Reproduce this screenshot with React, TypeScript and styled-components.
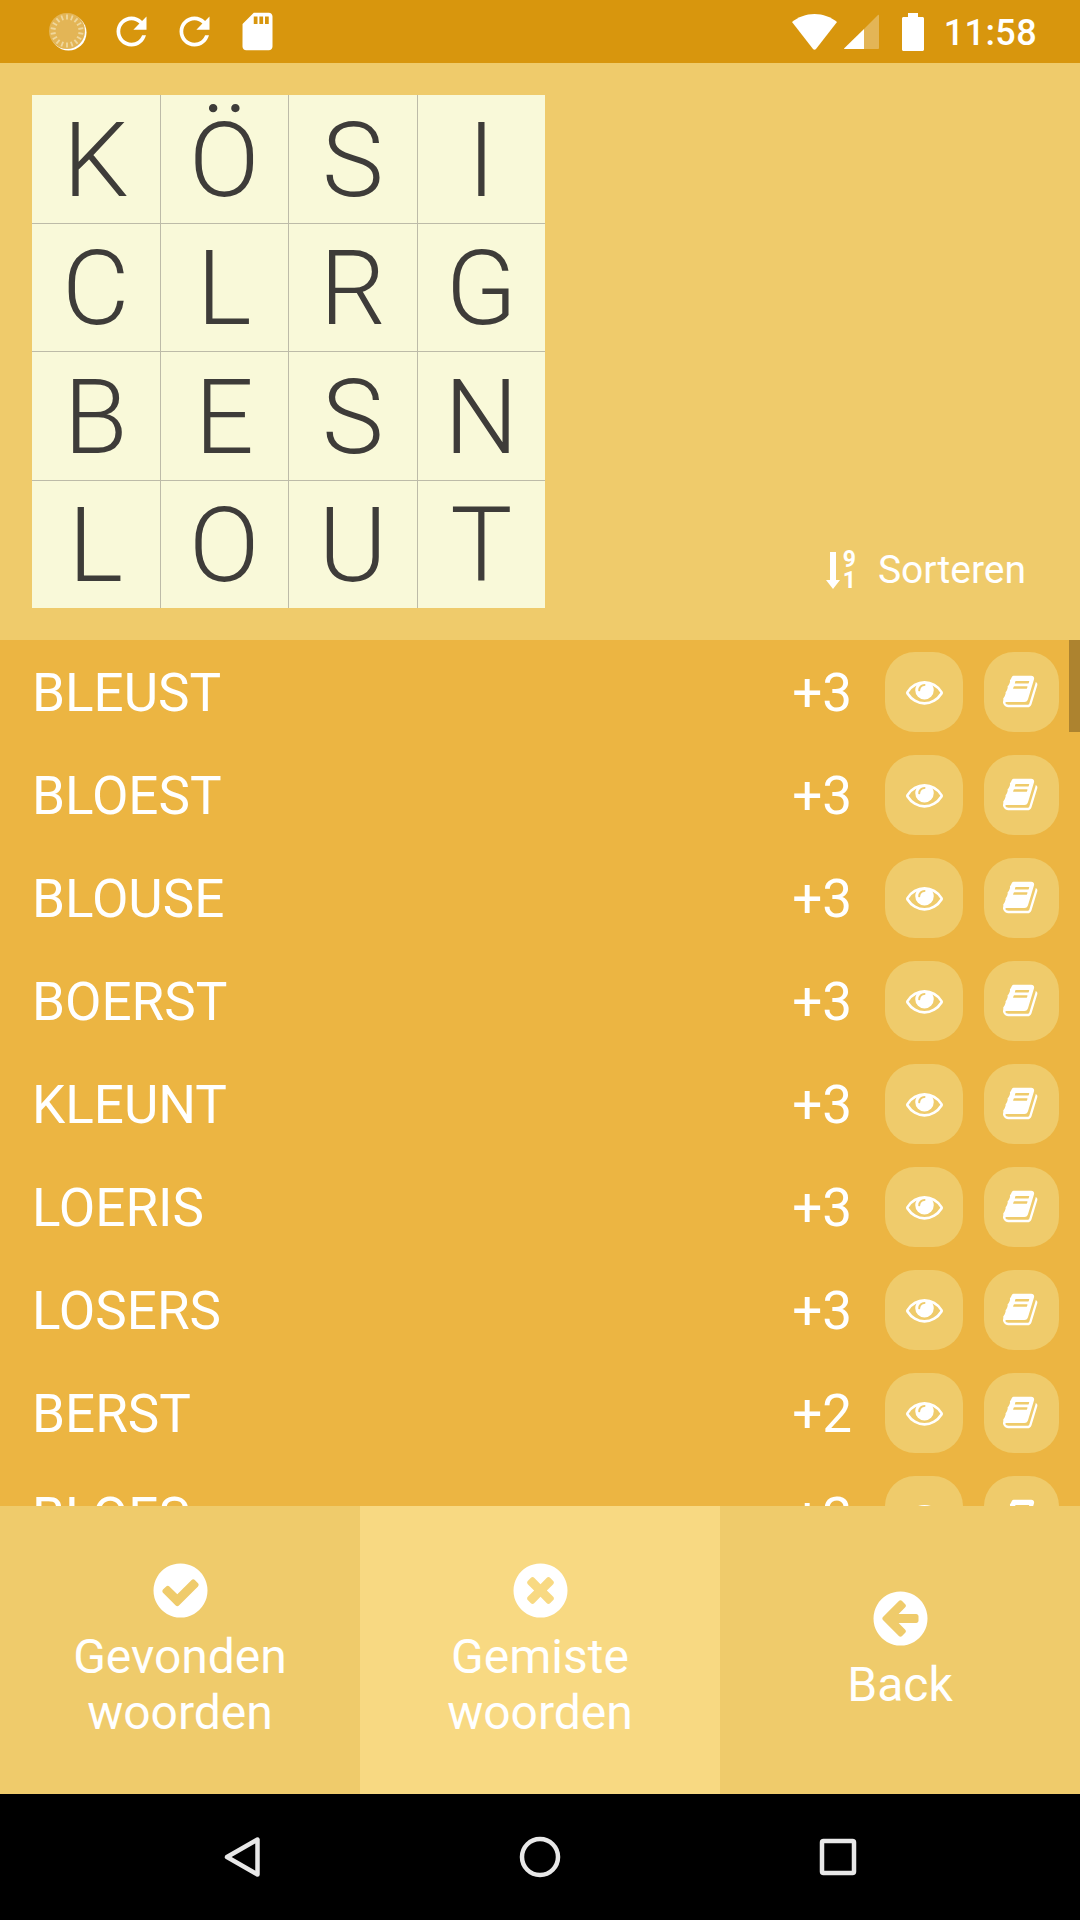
import React from 'react';
import styled, { createGlobalStyle } from 'styled-components';

const GlobalStyle = createGlobalStyle`
  html, body {
    margin: 0;
    padding: 0;
    background: #000;
  }
  * {
    box-sizing: border-box;
  }
`;

const Screen = styled.div`
  width: 1080px;
  height: 1920px;
  display: flex;
  flex-direction: column;
  overflow: hidden;
  font-family: Roboto, "Liberation Sans", sans-serif;
  color: #fff;
`;

const StatusBar = styled.div`
  height: 63px;
  flex: none;
  background: #d8960d;
  display: flex;
  align-items: center;
  padding: 0 43px 0 49px;
`;

const StatusLeft = styled.div`
  display: flex;
  align-items: center;
  gap: 18px;
  margin-right: auto;
`;

const StatusRight = styled.div`
  display: flex;
  align-items: center;
`;

const Clock = styled.span`
  font-size: 36px;
  font-weight: 500;
  margin-left: 20px;
  padding-top: 3px;
  letter-spacing: 0.4px;
`;

const Header = styled.div`
  height: 577px;
  flex: none;
  background: #efcb6b;
  display: flex;
  justify-content: space-between;
  padding: 32px 54px 32px 32px;
`;

const Board = styled.div`
  width: 513px;
  height: 513px;
  display: grid;
  grid-template-columns: repeat(4, 1fr);
  grid-template-rows: repeat(4, 1fr);
  gap: 1px;
  background: #bdbba8;
`;

const Cell = styled.div`
  background: #f9f9d9;
  color: #3e3c39;
  font-size: 104px;
  font-weight: 300;
  padding-top: 3px;
  display: flex;
  align-items: center;
  justify-content: center;
`;

const SortButton = styled.div`
  align-self: flex-end;
  display: flex;
  align-items: center;
  font-size: 39px;
  margin-bottom: 15px;
`;

const SortDigits = styled.div`
  display: flex;
  flex-direction: column;
  align-items: center;
  margin: 0 22px 0 3px;
  font-size: 23px;
  font-weight: 700;
  line-height: 21.500px;
`;

const List = styled.div`
  flex: 1;
  min-height: 0;
  position: relative;
  overflow: hidden;
  background: #ecb542;
`;

const ScrollThumb = styled.div`
  position: absolute;
  top: 0;
  right: 0;
  width: 11px;
  height: 92px;
  background: #ad832f;
`;

const Row = styled.div`
  height: 103px;
  display: flex;
  align-items: center;
  padding: 0 21px 0 32px;
  font-size: 53px;
`;

const Word = styled.span`
  flex: 1;
  padding-top: 2px;
`;

const Score = styled.span`
  margin-right: 33px;
  padding-top: 2px;
`;

const RoundButton = styled.div<{ $width: number; $gap?: number }>`
  width: ${(p) => p.$width}px;
  height: 80px;
  margin-left: ${(p) => p.$gap || 0}px;
  border-radius: 30px;
  background: #efcb6b;
  display: flex;
  align-items: center;
  justify-content: center;
`;

const Tabs = styled.div`
  height: 288px;
  flex: none;
  display: grid;
  grid-template-columns: repeat(3, 1fr);
`;

const Tab = styled.div<{ $active?: boolean }>`
  background: ${(p) => (p.$active ? '#f8d982' : '#efcb6b')};
  display: flex;
  flex-direction: column;
  align-items: center;
  justify-content: center;
  padding-bottom: 1px;
  font-size: 48px;
  line-height: 56px;
  text-align: center;
`;

const TabIcon = styled.svg`
  width: 63px;
  height: 63px;
  margin-bottom: 7px;
`;

const NavBar = styled.div`
  height: 126px;
  flex: none;
  background: #000;
  display: flex;
  align-items: center;
  justify-content: center;
  gap: 250px;
`;

const NavIcon = styled.svg`
  width: 48px;
  height: 48px;
  fill: none;
  stroke: #e8e8e8;
  stroke-width: 4.500;
`;

const PATHS = {
  eye: 'M1664 960q-152-236-381-353 61 104 61 225 0 185-131.5 316.5t-316.5 131.5-316.5-131.5-131.5-316.5q0-121 61-225-229 117-381 353 133 205 333.5 326.5t434.5 121.5 434.5-121.5 333.5-326.5zm-720-384q0-20-14-34t-34-14q-125 0-214.5 89.5t-89.5 214.5q0 20 14 34t34 14 34-14 14-34q0-86 61-147t147-61q20 0 34-14t14-34zm848 384q0 34-20 69-140 230-376.5 368.5t-499.5 138.5-499.5-139-376.5-368q-20-35-20-69t20-69q140-229 376.5-368t499.5-139 499.5 139 376.5 368q20 35 20 69z',
  book: 'M1639 478q40 57 18 129l-275 906q-19 64-76.5 107.5t-122.5 43.5h-923q-77 0-148.5-53.5t-99.5-131.5q-24-67-2-127 0-4 3-27t4-37q1-8-3-21.5t-3-19.5q2-11 8-21t16.5-23.5 16.5-23.5q23-38 45-91.5t30-91.5q3-10 .5-30t-.5-28q3-11 17-28t17-23q21-36 42-92t25-90q1-9-2.5-32t.5-28q4-13 22-30.5t22-22.5q19-26 42.5-84.5t27.5-96.5q1-8-3-25.5t-2-26.5q2-8 9-18t18-23 17-21q8-12 16.5-30.5t15-35 16-36 19.5-32 26.5-23.5 36-11.5 47.5 5.5l-1 3q38-9 51-9h761q74 0 114 56t18 130l-274 906q-36 119-71.5 153.5t-128.5 34.5h-869q-27 0-38 15-11 16-1 43 24 70 144 70h923q29 0 56-15.5t35-41.5l300-987q7-22 5-57 38 15 59 43zm-1064 2q-4 13 2 22.5t20 9.5h608q13 0 25.5-9.5t16.5-22.5l21-64q4-13-2-22.5t-20-9.5h-608q-13 0-25.5 9.5t-16.5 22.5zm-83 256q-4 13 2 22.5t20 9.5h608q13 0 25.5-9.5t16.5-22.5l21-64q4-13-2-22.5t-20-9.5h-608q-13 0-25.5 9.5t-16.5 22.5z',
  check: 'M1412 734q0-28-18-46l-91-90q-19-19-45-19t-45 19l-408 407-226-226q-19-19-45-19t-45 19l-91 90q-18 18-18 46 0 27 18 45l362 362q19 19 45 19 27 0 46-19l543-543q18-18 18-45zm252 162q0 209-103 385.5t-279.5 279.5-385.5 103-385.5-103-279.5-279.5-103-385.5 103-385.5 279.5-279.5 385.5-103 385.5 103 279.5 279.5 103 385.5z',
  times: 'M1277 1122q0-26-19-45l-181-181 181-181q19-19 19-45 0-27-19-46l-90-90q-19-19-46-19-26 0-45 19l-181 181-181-181q-19-19-45-19-27 0-46 19l-90 90q-19 19-19 46 0 26 19 45l181 181-181 181q-19 19-19 45 0 27 19 46l90 90q19 19 46 19 26 0 45-19l181-181 181 181q19 19 45 19 27 0 46-19l90-90q19-19 19-46zm387-226q0 209-103 385.5t-279.5 279.5-385.5 103-385.5-103-279.5-279.5-103-385.5 103-385.5 279.5-279.5 385.5-103 385.5 103 279.5 279.5 103 385.5z',
  back: 'M1408 960v-128q0-26-19-45t-45-19h-502l189-189q19-19 19-45t-19-45l-91-91q-18-18-45-18t-45 18l-362 362-91 91q-18 18-18 45t18 45l91 91 362 362q18 18 45 18t45-18l91-91q18-18 18-45t-18-45l-189-189h502q26 0 45-19t19-45zm256-64q0 209-103 385.5t-279.5 279.5-385.5 103-385.5-103-279.5-279.5-103-385.5 103-385.5 279.5-279.5 385.5-103 385.5 103 279.5 279.5 103 385.5z',
};

const REFRESH =
  'M17.65 6.35C16.2 4.9 14.21 4 12 4c-4.42 0-7.99 3.58-7.99 8s3.57 8 7.99 8c3.73 0 6.84-2.55 7.73-6h-2.08c-.82 2.33-3.04 4-5.65 4-3.31 0-6-2.69-6-6s2.69-6 6-6c1.66 0 3.14.69 4.22 1.78L13 11h7V4l-2.35 2.35z';
const SDCARD =
  'M18 2h-8L4.02 8 4 20c0 1.1.9 2 2 2h12c1.1 0 2-.9 2-2V4c0-1.1-.9-2-2-2zm-6 6h-2V4h2v4zm3 0h-2V4h2v4zm3 0h-2V4h2v4z';

const Spinner = () => (
  <svg width="38" height="38" viewBox="0 0 38 38" style={{ marginRight: 4 }}>
    <circle cx="19.5" cy="19.5" r="18" fill="#fff" />
    <circle cx="18" cy="18" r="18" fill="#e3b556" />
    {Array.from({ length: 18 }).map((_, i) => (
      <line
        key={i}
        x1="18"
        y1="1.500"
        x2="18"
        y2="6.500"
        stroke="#f0d79c"
        strokeWidth="1.800"
        transform={`rotate(${i * 20} 18 18)`}
      />
    ))}
  </svg>
);

const Wifi = () => (
  <svg width="45" height="36" viewBox="0 0 45 36" fill="#fff">
    <path d="M22.5 0C14 0 6 3 0 8l21 27c.8 1 2.2 1 3 0L45 8C39 3 31 0 22.5 0z" />
  </svg>
);

const Signal = () => (
  <svg width="35" height="35" viewBox="0 0 35 35" style={{ marginLeft: 7 }}>
    <path d="M20 15L34 1c.5-.5 1-.2 1 .5V34c0 .5-.5 1-1 1H20z" fill="#e3b556" />
    <path d="M20 15L0 34.5c-.2.3 0 .5.5.5H20z" fill="#fff" />
  </svg>
);

const Battery = () => (
  <svg width="22" height="38" viewBox="0 0 22 38" fill="#fff" style={{ marginLeft: 23 }}>
    <path d="M6 0h10v4h4.5c.8 0 1.5.7 1.5 1.5v31c0 .8-.7 1.5-1.5 1.5h-19C.7 38 0 37.300 0 36.500v-31C0 4.700.7 4 1.500 4H6z" />
  </svg>
);

const SortArrow = () => (
  <svg width="14" height="37" viewBox="0 0 14 37" fill="#fff">
    <path d="M4 0h6v28h4L7 37 0 28h4z" />
  </svg>
);

const words: [string, number][] = [
  ['BLEUST', 3],
  ['BLOEST', 3],
  ['BLOUSE', 3],
  ['BOERST', 3],
  ['KLEUNT', 3],
  ['LOERIS', 3],
  ['LOSERS', 3],
  ['BERST', 2],
  ['BLOES', 2],
];

const letters = ['K', 'Ö', 'S', 'I', 'C', 'L', 'R', 'G', 'B', 'E', 'S', 'N', 'L', 'O', 'U', 'T'];

export default function App() {
  return (
    <Screen>
      <GlobalStyle />
      <StatusBar>
        <StatusLeft>
          <Spinner />
          <svg width="45" height="45" viewBox="0 0 24 24" fill="#fff">
            <path d={REFRESH} />
          </svg>
          <svg width="45" height="45" viewBox="0 0 24 24" fill="#fff">
            <path d={REFRESH} />
          </svg>
          <svg width="45" height="45" viewBox="0 0 24 24" fill="#fff">
            <path d={SDCARD} />
          </svg>
        </StatusLeft>
        <StatusRight>
          <Wifi />
          <Signal />
          <Battery />
          <Clock>11:58</Clock>
        </StatusRight>
      </StatusBar>

      <Header>
        <Board>
          {letters.map((l, i) => (
            <Cell key={i}>{l}</Cell>
          ))}
        </Board>
        <SortButton>
          <SortArrow />
          <SortDigits>
            <span>9</span>
            <span>1</span>
          </SortDigits>
          Sorteren
        </SortButton>
      </Header>

      <List>
        {words.map(([word, score]) => (
          <Row key={word}>
            <Word>{word}</Word>
            <Score>+{score}</Score>
            <RoundButton $width={78}>
              <svg width="37" height="37" viewBox="0 0 1792 1792" fill="#fff">
                <path d={PATHS.eye} />
              </svg>
            </RoundButton>
            <RoundButton $width={75} $gap={21}>
              <svg width="37" height="37" viewBox="0 0 1792 1792" fill="#fff">
                <path d={PATHS.book} />
              </svg>
            </RoundButton>
          </Row>
        ))}
        <ScrollThumb />
      </List>

      <Tabs>
        <Tab>
          <TabIcon viewBox="0 0 1792 1792" fill="#fff">
            <path d={PATHS.check} />
          </TabIcon>
          Gevonden
          <br />
          woorden
        </Tab>
        <Tab $active>
          <TabIcon viewBox="0 0 1792 1792" fill="#fff">
            <path d={PATHS.times} />
          </TabIcon>
          Gemiste
          <br />
          woorden
        </Tab>
        <Tab>
          <TabIcon viewBox="0 0 1792 1792" fill="#fff">
            <path d={PATHS.back} />
          </TabIcon>
          Back
        </Tab>
      </Tabs>

      <NavBar>
        <NavIcon viewBox="0 0 48 48">
          <path d="M39.500 6.500v35L9 24z" strokeLinejoin="round" />
        </NavIcon>
        <NavIcon viewBox="0 0 48 48">
          <circle cx="24" cy="24" r="18" />
        </NavIcon>
        <NavIcon viewBox="0 0 48 48">
          <rect x="8" y="8" width="32" height="32" rx="1.500" />
        </NavIcon>
      </NavBar>
    </Screen>
  );
}
